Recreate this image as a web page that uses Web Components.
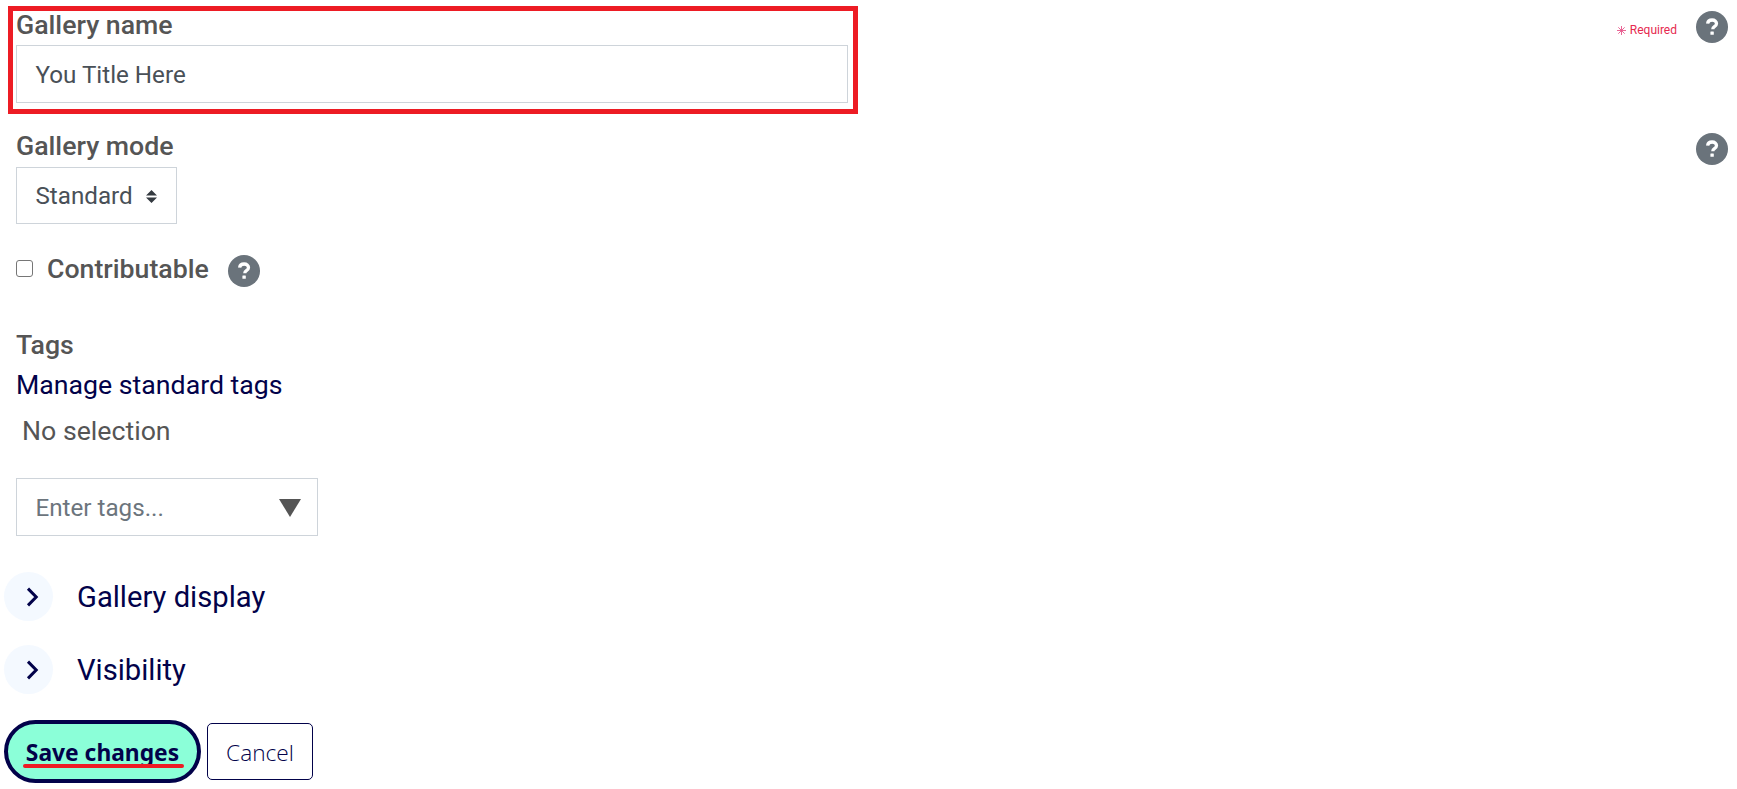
<!DOCTYPE html>
<html lang="en">
<head>
<meta charset="utf-8">
<title>Gallery settings</title>
<style>
  html, body { margin: 0; background: #fff; }
  body { font-family: Roboto, "Liberation Sans", sans-serif; font-size: 24px; color: #4f4f4f; }
</style>
</head>
<body>
<gallery-form>
  <form-row first>
    <marked-box>
      <field-label>Gallery name</field-label>
      <text-box wide value="You Title Here"></text-box>
    </marked-box>
    <required-note slot="side"></required-note>
    <help-icon slot="side"></help-icon>
  </form-row>
  <form-row>
    <div class="stack">
      <field-label>Gallery mode</field-label>
      <select-box value="Standard"></select-box>
    </div>
    <help-icon slot="side"></help-icon>
  </form-row>
  <check-row label="Contributable"></check-row>
  <tags-field></tags-field>
  <collapse-row first>Gallery display</collapse-row>
  <collapse-row>Visibility</collapse-row>
  <action-bar></action-bar>
</gallery-form>

<script>
  const HELP_SVG =
    '<svg viewBox="0 0 32 32" width="32" height="32" aria-hidden="true">' +
    '<circle cx="16" cy="16" r="16" fill="#6a737b"/>' +
    '<path d="M11.6 12.6c.3-2.3 2-3.6 4.5-3.6 2.6 0 4.4 1.4 4.4 3.5 0 1.6-.9 2.4-2.1 3.2-1.1.7-1.6 1.2-1.6 2.6"' +
    ' fill="none" stroke="#fff" stroke-width="3.3"/>' +
    '<rect x="14.4" y="20.4" width="3.4" height="3.4" rx=".5" fill="#fff"/></svg>';

  // small helper, every element below is only markup + styles
  function define(name, css, html) {
    customElements.define(name, class extends HTMLElement {
      constructor() {
        super();
        this.attachShadow({ mode: 'open' });
      }
      connectedCallback() {
        this.shadowRoot.innerHTML = '<style>' + css + '</style>' +
          (typeof html === 'function' ? html(this) : html);
      }
    });
  }

  define('gallery-form',
    ':host{display:block;padding:6px 9px 0 4px;box-sizing:border-box;width:1737px;height:789px;overflow:hidden}',
    '<slot></slot>');

  define('form-row',
    ':host{display:flex;justify-content:space-between;align-items:flex-start;margin-top:18px}' +
    ':host([first]){margin-top:0}' +
    '.side{display:flex;align-items:center;gap:19px;margin-top:1px}' +
    ':host([first]) .side{margin-top:5px}' +
    '::slotted(.stack){display:block;margin-left:12px}',
    '<slot></slot><div class="side"><slot name="side"></slot></div>');

  define('marked-box',
    ':host{display:block;width:850px;height:108px;box-sizing:border-box;margin-left:4px;' +
    'border:5px solid #ed1c24;padding:0 5px 0 3px}',
    '<slot></slot>');

  define('field-label',
    ':host{display:block;font:500 26.7px/28px Roboto,sans-serif;color:#555;height:34px}',
    '<slot></slot>');

  define('text-box',
    ':host{display:block;box-sizing:border-box;height:58px;border:1px solid #ced4da;background:#fff;' +
    'padding:1px 18.5px 0;font:400 24.2px/56px Roboto,sans-serif;color:#495057;width:832px}',
    h => h.getAttribute('value') || '');

  define('select-box',
    ':host{display:flex;align-items:center;box-sizing:border-box;width:161px;height:57px;margin-top:1px;' +
    'border:1px solid #ced4da;padding:1px 19px 0 18.5px;justify-content:space-between;' +
    'font:400 24.2px/1 Roboto,sans-serif;color:#495057}' +
    'svg{display:block}',
    h => '<span>' + h.getAttribute('value') + '</span>' +
      '<svg width="11" height="13" viewBox="0 0 11 13"><path d="M5.5 0 11 5.6H0zM0 7.6h11L5.5 13z" fill="#343a40"/></svg>');

  define('help-icon',
    ':host{display:block;width:32px;height:32px}svg{display:block}',
    HELP_SVG);

  define('required-note',
    ':host{display:flex;align-items:center;gap:4px;margin-top:6px;font:400 12px/16px Roboto,sans-serif;color:#e6294f;white-space:nowrap}' +
    'svg{display:block}',
    '<svg width="9" height="9" viewBox="0 0 9 9"><path d="M4.5 0v9M0 4.5h9M1.3 1.3l6.4 6.4M7.7 1.3 1.3 7.7" stroke="#e6568a" stroke-width=".9" fill="none"/></svg><span>Required</span>');

  define('check-row',
    ':host{display:flex;align-items:flex-start;margin:31px 0 0 12px;height:32px;color:#555}' +
    '.box{width:17px;height:17px;box-sizing:border-box;border:1px solid #767676;border-radius:3px;background:#fff;margin:5px 14px 0 0}' +
    '.txt{font:500 26.7px/28px Roboto,sans-serif;margin:0 19px 0 0}' +
    'svg{display:block}',
    h => '<span class="box"></span><span class="txt">' + h.getAttribute('label') + '</span>' + HELP_SVG);

  define('tags-field',
    ':host{display:block;margin:42px 0 0 12px;font:400 26.7px/32px Roboto,sans-serif}' +
    '.lbl{font-weight:500;color:#555;height:32px}' +
    '.link{color:#02024a;margin-top:8px;height:32px}' +
    '.none{color:#555;margin:14px 0 0 6px;height:32px}' +
    '.input{display:flex;align-items:center;justify-content:space-between;box-sizing:border-box;width:302px;height:58px;' +
    'margin-top:31px;border:1px solid #ced4da;padding:2px 16px 0 18.5px;color:#6c757d;font-size:24.2px}' +
    'svg{display:block}',
    '<div class="lbl">Tags</div>' +
    '<div class="link">Manage standard tags</div>' +
    '<div class="none">No selection</div>' +
    '<div class="input"><span>Enter tags...</span>' +
    '<svg width="22" height="18" viewBox="0 0 22 18"><path d="M0 0h22L11 18z" fill="#555"/></svg></div>');

  define('collapse-row',
    ':host{display:flex;align-items:center;height:49px;margin-top:24px;color:#02024a;font:400 29.2px/49px Roboto,sans-serif}' +
    ':host([first]){margin-top:36px}' +
    '.dot{width:49px;height:49px;border-radius:50%;background:#f4f9ff;margin-right:24px;display:flex;align-items:center;justify-content:center}' +
    '.title{margin-top:1px}' +
    'svg{display:block;margin-left:8px}',
    '<span class="dot"><svg width="13" height="20" viewBox="0 0 13 20"><path d="M2 1.6l8.2 8.4L2 18.4" fill="none" stroke="#02024a" stroke-width="3"/></svg></span><span class="title"><slot></slot></span>');

  define('action-bar',
    ':host{display:flex;align-items:center;gap:6px;margin-top:26px;height:63px}' +
    '.save{position:relative;box-sizing:border-box;width:197px;height:63px;border:4px solid #02024a;border-radius:32px;background:#8bffd8;' +
    'color:#02024a;font:700 22.8px/58px "Noto Sans",sans-serif;text-align:center;white-space:nowrap}' +
    '.save i{position:absolute;left:15px;right:13px;bottom:11px;height:4px;border-radius:2px;background:#ed1c24}' +
    '.cancel{box-sizing:border-box;width:106px;height:57px;border:1px solid #02024a;border-radius:5px;color:#02024a;' +
    'font:300 22.7px/57px "Open Sans",sans-serif;text-align:center}',
    '<div class="save">Save changes<i></i></div><div class="cancel">Cancel</div>');
</script>
</body>
</html>
